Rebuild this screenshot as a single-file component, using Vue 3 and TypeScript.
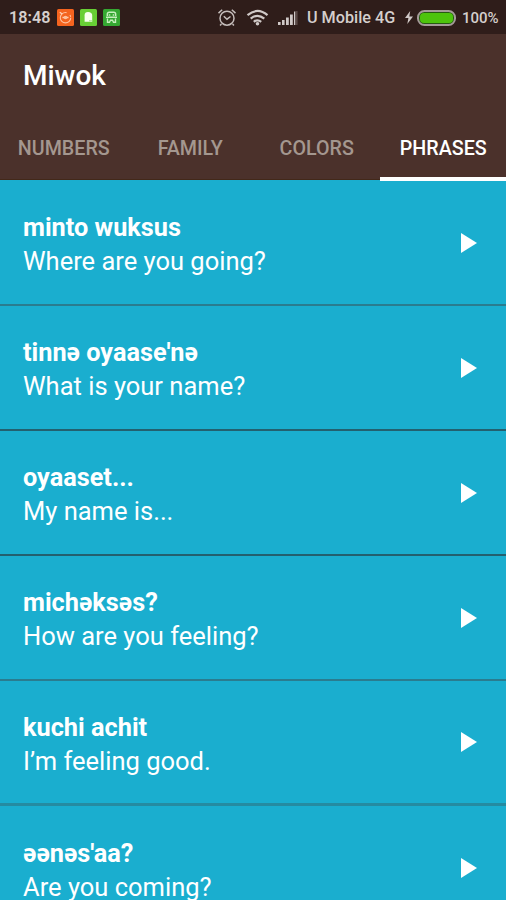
<script setup lang="ts">
interface Phrase {
  miwok: string
  english: string
  line: string
}

const tabs: string[] = ['NUMBERS', 'FAMILY', 'COLORS', 'PHRASES']
const activeTab = 'PHRASES'

const phrases: Phrase[] = [
  { miwok: 'minto wuksus', english: 'Where are you going?', line: 'soft' },
  { miwok: "tinnə oyaase'nə", english: 'What is your name?', line: 'sharp' },
  { miwok: 'oyaaset...', english: 'My name is...', line: 'sharp' },
  { miwok: 'michəksəs?', english: 'How are you feeling?', line: 'soft' },
  { miwok: 'kuchi achit', english: 'I’m feeling good.', line: 'wide' },
  { miwok: "əənəs'aa?", english: 'Are you coming?', line: 'soft' },
]
</script>

<template>
  <div class="screen">
    <header class="status">
      <span class="clock">18:48</span>
      <svg class="app-icon" viewBox="0 0 17 17">
        <rect width="17" height="17" rx="1.5" fill="#f4641f" />
        <circle cx="8.5" cy="8.7" r="5.2" fill="none" stroke="#ffc19c" stroke-width="1.1" stroke-dasharray="25 4 2 2" />
        <path d="M2.8 3.2l2.4 1.8M5.5 8.5h6" stroke="#ffd2b8" stroke-width="1.4" />
        <circle cx="8.5" cy="8.5" r="1.8" fill="#ffc19c" />
      </svg>
      <svg class="app-icon" viewBox="0 0 17 17">
        <rect width="17" height="17" rx="1.5" fill="#68cf35" />
        <path d="M4.6 12.8V6.2Q4.6 3 8 3q4.2 0 4.2 3.6v6.2z" fill="#f6ffed" />
        <path d="M9 11.8h3.4" stroke="#a6df83" />
      </svg>
      <svg class="app-icon" viewBox="0 0 17 17">
        <rect width="17" height="17" rx="1.5" fill="#35a832" />
        <path d="M4.3 7V5.2q0-1.9 2-1.9h4.4q2 0 2 1.9V7M3 8.2h11M4.5 9.5v3.8h2l1-2h2l1 2h2V9.5" fill="none" stroke="#c6efbd" stroke-width="1.4" />
        <path d="M5.7 6h1.6M9.7 6h1.6" stroke="#c6efbd" stroke-width="1.3" />
      </svg>
      <div class="system">
        <svg class="alarm" viewBox="0 0 20 20">
          <circle cx="10" cy="10.2" r="7" />
          <path d="M1.5 5.1l3.7-3.3M18.5 5.1l-3.7-3.3M4.4 16l-1.3 1.5M15.6 16l1.3 1.5M6.8 8.2l3.2 3 3.5-2.7" />
        </svg>
        <svg class="wifi" viewBox="0 0 23 17">
          <path d="M1.5 6.2q10-8.5 20 0M4.7 9.7q6.8-5.8 13.6 0M7.8 12.8q3.7-3 7.4 0" />
          <circle cx="11.5" cy="14.7" r="1.8" />
        </svg>
        <svg class="signal" viewBox="0 0 21 15">
          <path d="M0 12h2.6v3H0zM4 10h2.6v5H4zM8 7.5h2.8V15H8zM12 4.5h2.8V15H12zM16 1.5h1.4V15H16z" />
          <path class="faint" d="M17.6 1H19.6v14h-2z" />
        </svg>
        <span class="carrier">U Mobile 4G</span>
        <svg class="bolt" viewBox="0 0 8 13"><path d="M5.2 0L0 7h3.4L2.3 13 8 5.5H4.3z" /></svg>
        <svg class="battery" viewBox="0 0 39 16">
          <rect x="1" y="1" width="37" height="14" rx="6.5" fill="#265b11" stroke="#a49a98" stroke-width="2" />
          <rect x="3" y="3" width="33" height="10" rx="4" fill="#4dc40c" />
        </svg>
        <span class="percent">100%</span>
      </div>
    </header>

    <div class="appbar">
      <h1>Miwok</h1>
      <nav>
        <button v-for="tab in tabs" :key="tab" :class="{ active: tab === activeTab }"><span>{{ tab }}</span></button>
      </nav>
    </div>

    <ul>
      <li v-for="phrase in phrases" :key="phrase.miwok" :class="phrase.line">
        <div class="words">
          <strong>{{ phrase.miwok }}</strong>
          <span>{{ phrase.english }}</span>
        </div>
        <svg class="play" viewBox="0 0 16 20"><path d="M0 0v20l16-10z" /></svg>
      </li>
    </ul>
  </div>
</template>

<style>
body {
  overflow: hidden;
}
</style>

<style scoped>
.screen {
  width: 506px;
  height: 900px;
  overflow: hidden;
  background: #1aaecf;
  color: #fff;
  font-family: Roboto, "Noto Sans", sans-serif;
}
.status {
  display: flex;
  align-items: center;
  box-sizing: border-box;
  height: 34px;
  padding: 1px 8px 0 9px;
  background: #2f1d1a;
  color: #d5cfcd;
  font-size: 16.2px;
  font-weight: 500;
  white-space: nowrap;
}
.clock {
  width: 48px;
  font-weight: 600;
}
.app-icon {
  width: 17px;
  height: 17px;
  margin-right: 6px;
}
.system {
  display: flex;
  align-items: center;
  margin-left: auto;
}
.system svg {
  flex: none;
  fill: #d0c9c7;
}
.system .alarm {
  width: 20px;
  height: 20px;
  fill: none;
  stroke: #c5bdbb;
  stroke-width: 1.5;
}
.system .wifi {
  width: 23px;
  height: 17px;
  margin-left: 9px;
}
.wifi path {
  fill: none;
  stroke: #d0c9c7;
  stroke-width: 2.2;
}
.signal {
  width: 21px;
  height: 15px;
  margin-left: 9px;
}
.signal .faint {
  fill: #5b4a47;
}
.carrier {
  width: 89px;
  margin-left: 8px;
}
.bolt {
  width: 8px;
  height: 13px;
  margin-left: 9px;
}
.battery {
  width: 39px;
  height: 16px;
  margin-left: 4px;
}
.percent {
  width: 36px;
  margin-left: 6px;
  font-size: 15px;
}
.appbar {
  display: flex;
  flex-direction: column;
  box-sizing: border-box;
  height: 146px;
  background: #4b312b;
  border-bottom: 1px solid #432819;
}
h1 {
  height: 81px;
  margin: 0;
  padding-left: 23px;
  font-size: 28px;
  font-weight: 500;
  line-height: 83px;
}
nav {
  display: grid;
  grid-template-columns: repeat(4, 1fr);
  height: 66px;
}
button {
  display: flex;
  justify-content: center;
  box-sizing: border-box;
  height: 66px;
  padding: 2px 0 0 1px;
  border: 0;
  border-bottom: 4px solid transparent;
  background: none;
  color: #a4978f;
  font: 500 19.7px/64px Roboto, sans-serif;
}
button.active {
  border-bottom-color: #fff;
  color: #fff;
}
ul {
  margin: 0;
  padding: 1px 0 0;
  list-style: none;
}
li {
  display: flex;
  align-items: center;
  justify-content: space-between;
  box-sizing: border-box;
  height: 125.1px;
  padding: 0 29px 0 23px;
  border-bottom: 2px solid #23606f;
}
li.soft {
  border-bottom-color: #2a7c8f;
}
li.wide {
  border-bottom: 3px solid #258ba1;
}
.words {
  display: flex;
  flex-direction: column;
  padding-top: 4.2px;
  font-size: 25.5px;
  line-height: 34px;
  white-space: nowrap;
}
.words span {
  margin-top: -1px;
}
strong {
  font-size: 25.3px;
  font-weight: 700;
}
.play {
  width: 16px;
  height: 20px;
  fill: #fff;
}
</style>
